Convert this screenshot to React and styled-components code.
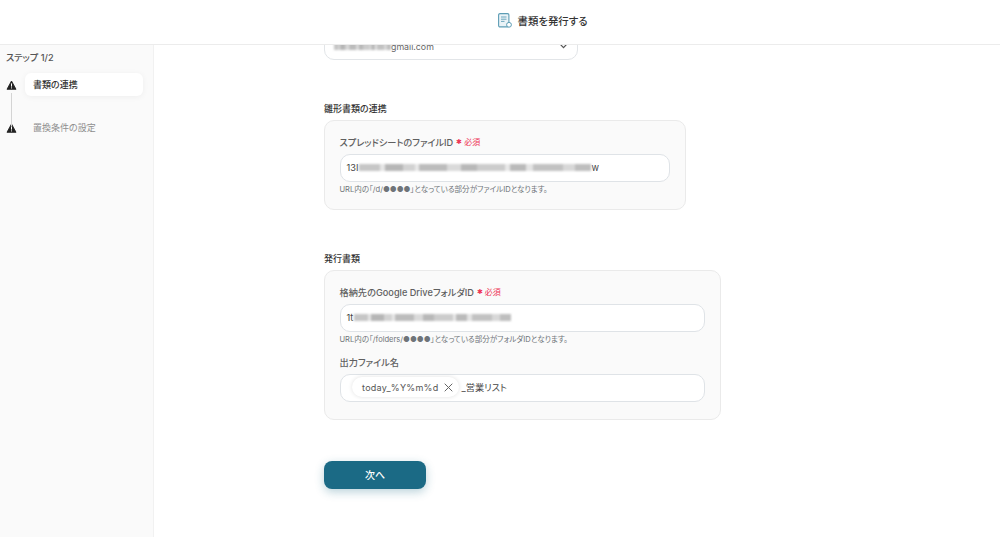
import React from 'react';
import styled, { createGlobalStyle } from 'styled-components';

const GlobalStyle = createGlobalStyle`
  html, body {
    margin: 0;
    padding: 0;
    height: 100%;
    background: #ffffff;
  }
  body {
    font-family: Inter, "Noto Sans CJK JP", "Noto Sans", sans-serif;
    font-feature-settings: "palt";
    color: #333333;
  }
  * {
    box-sizing: border-box;
  }
`;

const Page = styled.div`
  width: 1000px;
  height: 537px;
  display: flex;
  flex-direction: column;
  overflow: hidden;
`;

const Header = styled.header`
  height: 45px;
  flex: none;
  display: flex;
  align-items: center;
  justify-content: center;
  gap: 6px;
  padding: 0 0 3px 85px;
  background: #ffffff;
  border-bottom: 1px solid #ececec;
  position: relative;
  z-index: 2;
`;

const HeaderTitle = styled.h1`
  margin: 0;
  font-size: 10.4px;
  font-weight: 500;
  color: #333333;
`;

const Body = styled.div`
  flex: 1;
  display: flex;
  min-height: 0;
`;

const Sidebar = styled.aside`
  width: 154px;
  flex: none;
  padding: 6px 10px 0 6px;
  background: #fafafa;
  border-right: 1px solid #f1f1f1;
`;

const StepCount = styled.div`
  font-size: 9.2px;
  font-weight: 500;
  line-height: 13px;
  color: #555555;
  margin-bottom: 9px;
`;

const StepList = styled.div`
  display: flex;
  flex-direction: column;
  gap: 20px;
  position: relative;
`;

const StepLine = styled.div`
  position: absolute;
  left: 5px;
  top: 20px;
  width: 1px;
  height: 33px;
  background: #d4d4d4;
`;

const StepRow = styled.div`
  display: flex;
  align-items: center;
  gap: 8px;
  height: 23px;
`;

const StepName = styled.div`
  flex: 1;
  height: 23px;
  line-height: 23px;
  padding-left: 8px;
  font-size: 9px;
  font-weight: ${p => (p.$active ? 500 : 400)};
  color: ${p => (p.$active ? '#333333' : '#8e8e8e')};
  background: ${p => (p.$active ? '#ffffff' : 'transparent')};
  border-radius: 6px;
  box-shadow: ${p => (p.$active ? '0 1px 6px rgba(0, 0, 0, 0.05)' : 'none')};
`;

const Main = styled.main`
  flex: 1;
  min-width: 0;
  overflow: hidden;
  padding-left: 170px;
`;

// the reference is scrolled: the first select is cut off by the header
const Scrolled = styled.div`
  margin-top: -13px;
  display: flex;
  flex-direction: column;
  align-items: flex-start;
`;

const SelectBox = styled.div`
  width: 254px;
  height: 28px;
  display: flex;
  align-items: center;
  justify-content: space-between;
  padding: 0 9px;
  background: #ffffff;
  border: 1px solid #e2e5e8;
  border-radius: 10px;
  font-size: 8.8px;
  color: #666666;
`;

const SelectValue = styled.span`
  display: flex;
  align-items: center;
`;

const SectionLabel = styled.h2`
  margin: 42px 0 5px;
  font-size: 9px;
  line-height: 13px;
  font-weight: 500;
  color: #333333;
`;

const Card = styled.section`
  width: ${p => p.$width}px;
  padding: 15px 15px ${p => p.$bottom}px 14.5px;
  background: #fafafa;
  border: 1px solid #eaeaea;
  border-radius: 10px;
`;

const FieldLabel = styled.div`
  display: flex;
  align-items: center;
  gap: 3px;
  height: 13px;
  padding-bottom: 2px;
  font-size: 9.2px;
  font-weight: 500;
  color: #5f5f5f;
  margin-top: ${p => p.$top || 0}px;
`;

const Required = styled.span`
  display: inline-flex;
  align-items: center;
  gap: 2px;
  font-size: 8px;
  font-weight: 400;
  color: #ee3355;
`;

const Asterisk = styled.span`
  font-size: 7px;
  line-height: 8px;
  padding-top: 1px;
`;

const TextBox = styled.div`
  height: 28px;
  margin-top: 5px;
  display: flex;
  align-items: center;
  padding: 0 6px 2px;
  background: #ffffff;
  border: 1px solid #dfe3e7;
  border-radius: 10px;
  font-size: 9.2px;
  color: #444444;
  white-space: nowrap;
`;

const Hint = styled.div`
  margin-top: 2px;
  height: 11px;
  line-height: 11px;
  font-size: 7.55px;
  color: #6f7479;
`;

const Blurred = styled.span`
  display: inline-block;
  height: 7px;
  width: ${p => p.$width}px;
  margin: ${p => p.$margin || '0'};
  filter: blur(1px);
  background: linear-gradient(
    90deg,
    #c6c6c6 0 9%,
    #e6e6e6 9% 11%,
    #b6b6b6 11% 19%,
    #d2d2d2 19% 24%,
    #e9e9e9 24% 26%,
    #bcbcbc 26% 38%,
    #dadada 38% 44%,
    #b8b8b8 44% 51%,
    #cccccc 51% 63%,
    #e8e8e8 63% 65%,
    #bababa 65% 72%,
    #e4e4e4 72% 75%,
    #c2c2c2 75% 88%,
    #d8d8d8 88% 93%,
    #bebebe 93% 100%
  );
`;

const Chip = styled.span`
  display: inline-flex;
  align-items: center;
  gap: 5px;
  height: 20px;
  margin: 0 3px 0 5px;
  padding: 0 6px 0 10.5px;
  background: #ffffff;
  border-radius: 10px;
  font-size: 9px;
  letter-spacing: 0.28px;
  color: #555555;
  box-shadow: 0 0 4px rgba(0, 0, 0, 0.12);
`;

const NextButton = styled.button`
  width: 102px;
  height: 28px;
  margin-top: 41px;
  padding: 0 0 2px;
  border: none;
  border-radius: 8px;
  background: #1b6a85;
  color: #ffffff;
  font-family: inherit;
  font-size: 10px;
  font-weight: 500;
  box-shadow: 0 3px 10px rgba(27, 106, 133, 0.3);
`;

const Warning = () => (
  <svg width="11" height="10" viewBox="0 0 11 10" style={{ flex: 'none' }}>
    <path d="M5.5 1 L10 9.3 H1 Z" fill="#222222" stroke="#222222" strokeWidth="0.9" strokeLinejoin="round" />
    <rect x="5" y="3.4" width="1" height="3.2" fill="#ffffff" />
    <rect x="5" y="7.4" width="1" height="1" fill="#ffffff" />
  </svg>
);

const DocIcon = () => (
  <svg width="14" height="15" viewBox="0 0 14 15" fill="none">
    <rect x="0.6" y="0.6" width="10.3" height="13.3" rx="1.4" fill="#eaf3f7" stroke="#5d9db5" strokeWidth="1.1" />
    <path d="M3 4 H8.5 M3 6.2 H8.5 M3 8.4 H6.5" stroke="#5d9db5" strokeWidth="0.9" />
    <circle cx="11" cy="11.8" r="2.4" fill="#ffffff" stroke="#5d9db5" strokeWidth="1" />
  </svg>
);

const Chevron = () => (
  <svg width="9" height="6" viewBox="0 0 9 6" fill="none">
    <path d="M1 1 L4.5 4.6 L8 1" stroke="#555555" strokeWidth="1.2" />
  </svg>
);

const Cross = () => (
  <svg width="9" height="9" viewBox="0 0 9 9" fill="none">
    <path d="M0.7 0.7 L8.3 8.3 M8.3 0.7 L0.7 8.3" stroke="#666666" strokeWidth="1" />
  </svg>
);

const RequiredMark = () => (
  <Required>
    <Asterisk>✱</Asterisk>必須
  </Required>
);

export default function App() {
  return (
    <Page>
      <GlobalStyle />
      <Header>
        <DocIcon />
        <HeaderTitle>書類を発行する</HeaderTitle>
      </Header>
      <Body>
        <Sidebar>
          <StepCount>ステップ 1/2</StepCount>
          <StepList>
            <StepLine />
            <StepRow>
              <Warning />
              <StepName $active>書類の連携</StepName>
            </StepRow>
            <StepRow>
              <Warning />
              <StepName>置換条件の設定</StepName>
            </StepRow>
          </StepList>
        </Sidebar>
        <Main>
          <Scrolled>
            <SelectBox>
              <SelectValue>
                <Blurred $width={57} />
                gmail.com
              </SelectValue>
              <Chevron />
            </SelectBox>

            <SectionLabel>雛形書類の連携</SectionLabel>
            <Card $width={362} $bottom={14}>
              <FieldLabel>
                スプレッドシートのファイルID
                <RequiredMark />
              </FieldLabel>
              <TextBox>
                13I
                <Blurred $width={232} $margin="0 0 0 1px" />
                w
              </TextBox>
              <Hint>URL内の「/d/●●●●」となっている部分がファイルIDとなります。</Hint>
            </Card>

            <SectionLabel>発行書類</SectionLabel>
            <Card $width={397} $bottom={17}>
              <FieldLabel>
                格納先のGoogle DriveフォルダID
                <RequiredMark />
              </FieldLabel>
              <TextBox>
                1t
                <Blurred $width={157} $margin="0 0 0 1px" />
              </TextBox>
              <Hint>URL内の「/folders/●●●●」となっている部分がフォルダIDとなります。</Hint>
              <FieldLabel $top={11}>出力ファイル名</FieldLabel>
              <TextBox>
                <Chip>
                  today_%Y%m%d
                  <Cross />
                </Chip>
                _営業リスト
              </TextBox>
            </Card>

            <NextButton>次へ</NextButton>
          </Scrolled>
        </Main>
      </Body>
    </Page>
  );
}
